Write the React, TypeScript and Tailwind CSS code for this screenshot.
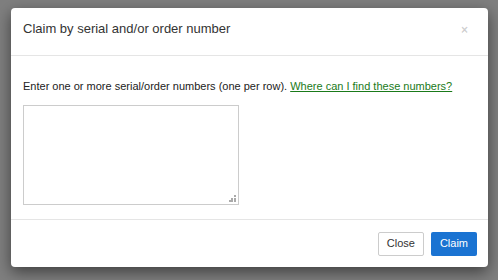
export default function App() {
  return (
    <div
      className="w-[498px] h-[280px] bg-[#7f7f7f] pt-[8px] pl-[11px]"
      style={{ fontFamily: '"Liberation Sans", Arial, sans-serif' }}
    >
      <div className="w-[477px] h-[259px] bg-white rounded-[4px] shadow-[0_5px_15px_rgba(0,0,0,0.5)] flex flex-col">
        <div className="h-[48px] border-b border-[#e5e5e5] flex items-start justify-between pt-[14px] pl-[12px] pr-[20px]">
          <h3 className="text-[13px] text-[#333] leading-none">Claim by serial and/or order number</h3>
          <button className="mt-[2px] text-[12px] font-bold text-[#000]/20 leading-none">×</button>
        </div>
        <div className="flex-1 pl-[12px] pt-[23px]">
          <p className="text-[11px] text-[#222] leading-[14px]">
            Enter one or more serial/order numbers (one per row).{" "}
            <a href="#" className="text-[#1a7a1a] underline">Where can I find these numbers?</a>
          </p>
          <div className="relative mt-[12px] w-[216px] h-[100px]">
            <textarea className="w-full h-full border border-[#ccc] resize-none block" />
            <svg className="absolute right-[3px] bottom-[3px]" width="7" height="7" viewBox="0 0 7 7">
              <rect x="5" y="0" width="2" height="2" fill="#aaa" />
              <rect x="2" y="3" width="2" height="2" fill="#aaa" />
              <rect x="5" y="3" width="2" height="2" fill="#aaa" />
              <rect x="0" y="5" width="2" height="2" fill="#aaa" />
              <rect x="2" y="5" width="2" height="2" fill="#aaa" />
              <rect x="5" y="5" width="2" height="2" fill="#aaa" />
            </svg>
          </div>
        </div>
        <div className="h-[48px] border-t border-[#e5e5e5] flex items-center justify-end gap-[7px] pr-[11px]">
          <button className="h-[24px] px-[8px] border border-[#ccc] rounded-[2px] bg-white text-[11px] text-[#333]">Close</button>
          <button className="h-[24px] px-[9px] rounded-[2px] bg-[#1a73d2] text-[11px] text-white">Claim</button>
        </div>
      </div>
    </div>
  );
}
